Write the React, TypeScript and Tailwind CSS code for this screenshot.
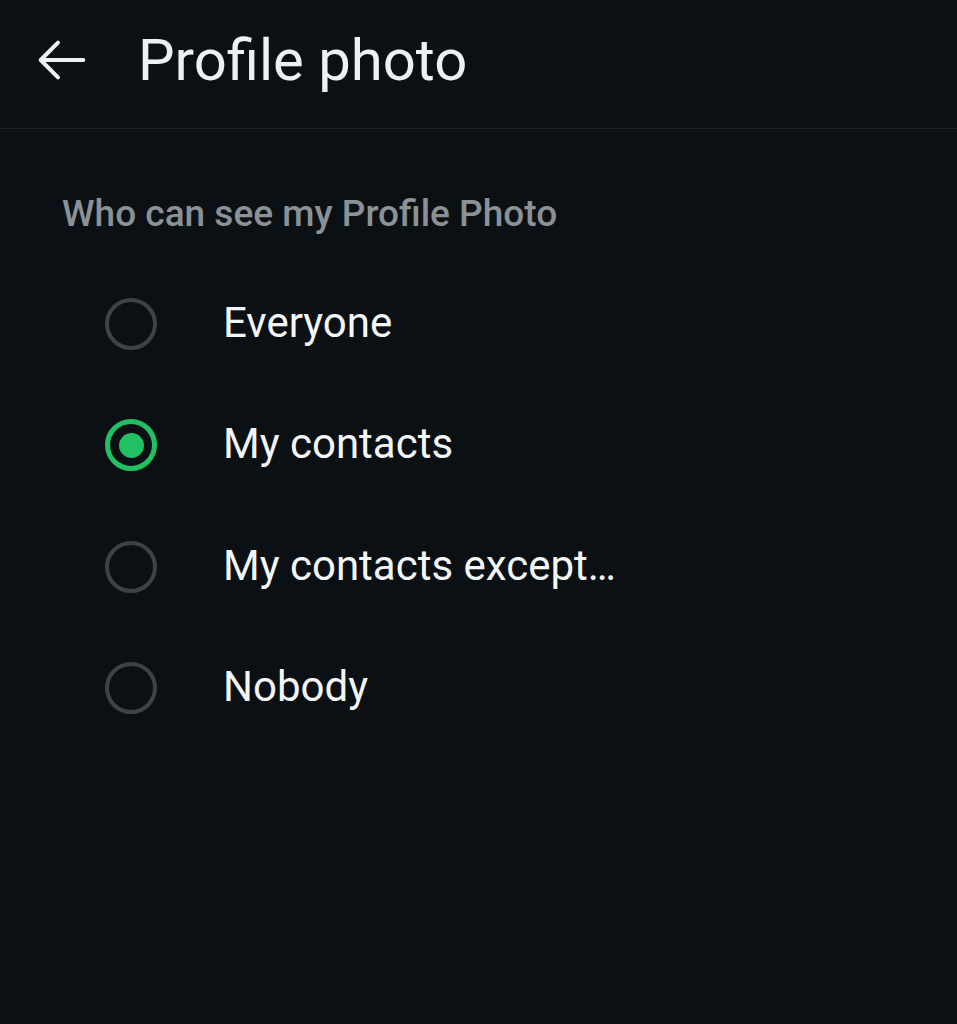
import React from "react";

const options = ["Everyone", "My contacts", "My contacts except\u2026", "Nobody"];

export default function App() {
  const selected = 1;
  return (
    <div className="w-[957px] h-[1024px] bg-[#0b1014] text-white overflow-hidden" style={{ fontFamily: "Roboto, 'Noto Sans', sans-serif" }}>
      <div className="h-[129px] flex items-center border-b border-[#1c2226]">
        <div className="w-[138px] pl-[30px] flex items-center -mt-[8px]">
          <svg width="64" height="64" viewBox="0 0 24 24" fill="none" stroke="#eef0f1" strokeWidth="1.5" strokeLinecap="round" strokeLinejoin="round">
            <path d="M20 12H4M10.5 5.5L4 12l6.5 6.5" />
          </svg>
        </div>
        <div className="text-[58px] text-[#eef0f1] leading-none -mt-[8px]">Profile photo</div>
      </div>
      <div className="pt-[66px] pl-[62px] text-[37px] text-[#8b9296] font-medium leading-none">Who can see my Profile Photo</div>
      <div className="pt-[31px]">
        {options.map((o, i) => (
          <div key={o} className="h-[121.5px] flex items-center">
            <div className="w-[223px] pl-[105px] flex items-center">
              {i === selected ? (
                <div className="w-[52px] h-[52px] rounded-full border-[5px] border-[#21c063] flex items-center justify-center">
                  <div className="w-[25px] h-[25px] rounded-full bg-[#21c063]" />
                </div>
              ) : (
                <div className="w-[52px] h-[52px] rounded-full border-[4px] border-[#3b4348]" />
              )}
            </div>
            <div className="text-[42px] text-[#f4f6f6] leading-none -mt-[2px]">{o}</div>
          </div>
        ))}
      </div>
    </div>
  );
}
